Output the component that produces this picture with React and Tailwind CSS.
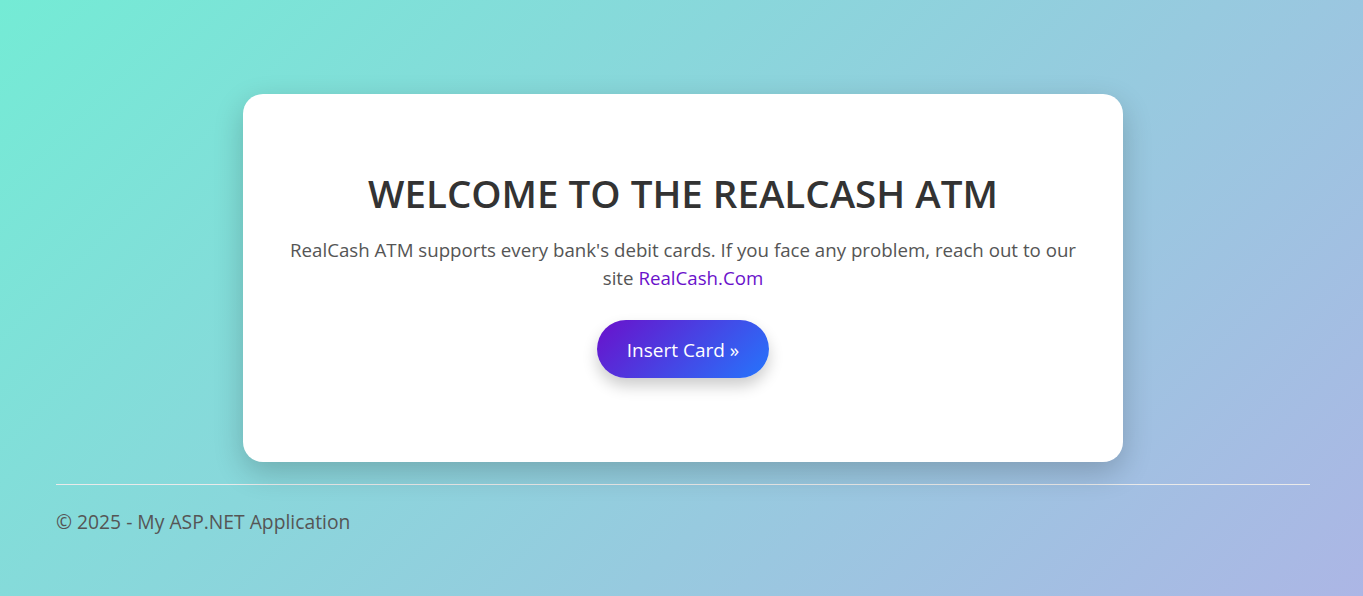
export default function App() {
  return (
    <div
      className="min-h-[596px] w-full bg-[linear-gradient(135deg,#74ebd5_0%,#acb6e5_100%)] pl-[56px] pr-[53px] pt-[94px]"
      style={{ fontFamily: '"Open Sans", "Noto Sans", sans-serif' }}
    >
      <main className="flex justify-center">
        <div className="flex h-[368px] w-[880px] flex-col items-center rounded-[20px] bg-white px-[40px] pt-[76px] text-center shadow-[0_10px_30px_rgba(0,0,0,0.2)]">
          <h1 className="mb-[20px] text-[38.5px] font-semibold leading-[46px] text-[#333]">
            WELCOME TO THE REALCASH ATM
          </h1>
          <p className="max-w-[800px] text-[18.7px] leading-[28px] text-[#555]">
            RealCash ATM supports every bank's debit cards. If you face any problem, reach out to our site{' '}
            <a href="#" className="text-[#6a11cb]">RealCash.Com</a>
          </p>
          <button className="mt-[28px] h-[58px] w-[172px] rounded-full bg-[linear-gradient(135deg,#6a11cb_0%,#2575fc_100%)] pt-[3px] text-[19px] text-white shadow-[0_8px_15px_rgba(0,0,0,0.2)]">
            Insert Card &raquo;
          </button>
        </div>
      </main>
      <footer className="mt-[22px]">
        <hr className="border-t border-[#eaeaea]" />
        <p className="pt-[23px] text-[19.3px] leading-[28px] text-[#555]">
          &copy; 2025 - My ASP.NET Application
        </p>
      </footer>
    </div>
  )
}
